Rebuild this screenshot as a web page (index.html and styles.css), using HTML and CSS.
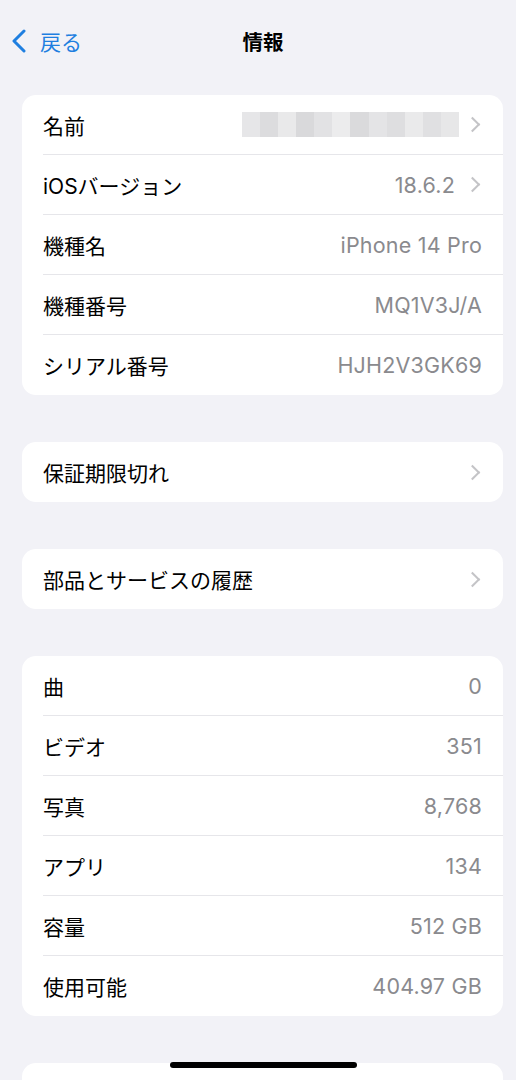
FILE: index.html
```html
<!DOCTYPE html>
<html lang="ja">
<head>
  <meta charset="UTF-8" />
  <title>情報</title>
  <meta name="viewport" content="width=device-width, initial-scale=1.0"/>
  <link rel="stylesheet" href="styles.css">
</head>
<body>
  <div class="nav">
    <a class="back">
      <svg width="16" height="24" viewBox="0 0 16 24"><path d="M13 2 L3 12 L13 22" fill="none" stroke="#1f7fe0" stroke-width="3" stroke-linecap="round" stroke-linejoin="round"/></svg>
      <span>戻る</span>
    </a>
    <div class="title">情報</div>
  </div>

  <div class="group">
    <div class="row">
      <span class="label">名前</span>
      <span class="blur">
        <i style="background:#e6e6e8"></i><i style="background:#dcdcde"></i><i style="background:#e9e9ea"></i><i style="background:#d9d9db"></i><i style="background:#e2e2e4"></i><i style="background:#ececed"></i><i style="background:#dadadc"></i><i style="background:#e4e4e6"></i><i style="background:#dedee0"></i><i style="background:#eaeaeb"></i><i style="background:#e0e0e2"></i><i style="background:#e7e7e8"></i>
      </span>
      <span class="chev"></span>
    </div>
    <div class="row">
      <span class="label">iOSバージョン</span>
      <span class="value">18.6.2</span>
      <span class="chev"></span>
    </div>
    <div class="row">
      <span class="label">機種名</span>
      <span class="value">iPhone 14 Pro</span>
    </div>
    <div class="row">
      <span class="label">機種番号</span>
      <span class="value">MQ1V3J/A</span>
    </div>
    <div class="row">
      <span class="label">シリアル番号</span>
      <span class="value">HJH2V3GK69</span>
    </div>
  </div>

  <div class="group">
    <div class="row">
      <span class="label">保証期限切れ</span>
      <span class="chev"></span>
    </div>
  </div>

  <div class="group">
    <div class="row">
      <span class="label">部品とサービスの履歴</span>
      <span class="chev"></span>
    </div>
  </div>

  <div class="group">
    <div class="row"><span class="label">曲</span><span class="value">0</span></div>
    <div class="row"><span class="label">ビデオ</span><span class="value">351</span></div>
    <div class="row"><span class="label">写真</span><span class="value">8,768</span></div>
    <div class="row"><span class="label">アプリ</span><span class="value">134</span></div>
    <div class="row"><span class="label">容量</span><span class="value">512 GB</span></div>
    <div class="row"><span class="label">使用可能</span><span class="value">404.97 GB</span></div>
  </div>

  <div class="group group-cut"></div>

  <div class="home-bar"></div>
</body>
</html>
```

FILE: styles.css
```css
html, body { margin: 0; padding: 0; }
body {
  background: #f2f2f7;
  font-family: Inter, "Noto Sans CJK JP", sans-serif;
  color: #000;
  width: 516px;
  height: 1080px;
  overflow: hidden;
  position: relative;
}
.nav {
  height: 48px;
  margin-top: 17px;
  margin-bottom: 30px;
  display: grid;
  grid-template-columns: 1fr auto 1fr;
  align-items: center;
}
.back {
  display: flex;
  align-items: center;
  gap: 13px;
  padding-left: 11px;
  color: #1f7fe0;
  font-size: 21px;
}
.title {
  font-size: 20.5px;
  font-weight: bold;
  padding-left: 10px;
}
.group {
  background: #fff;
  margin: 0 13px 47px 22px;
  border-radius: 14px;
  padding-left: 21px;
}
.group-cut {
  height: 17px;
  margin-bottom: 0;
  border-radius: 14px 14px 0 0;
}
.row {
  height: 60px;
  display: flex;
  align-items: center;
  padding-right: 21px;
  border-bottom: 1px solid #e6e6ea;
  font-size: 21px;
  box-sizing: border-box;
}
.row:last-child { border-bottom: none; }
.label { flex: 1; }
.value {
  color: #8a8a8e;
  font-size: 21.5px;
  letter-spacing: 0.2px;
}
.chev {
  width: 9px;
  height: 9px;
  border-top: 2px solid #c4c4c7;
  border-right: 2px solid #c4c4c7;
  transform: rotate(45deg);
  margin-left: 12px;
  margin-right: 4px;
}
.blur {
  display: flex;
  width: 217px;
  height: 25px;
  margin-right: -4px;
}
.blur i { flex: 1; }
.home-bar {
  position: absolute;
  left: 170px;
  top: 1062px;
  width: 187px;
  height: 6px;
  border-radius: 3px;
  background: #000;
}
```
